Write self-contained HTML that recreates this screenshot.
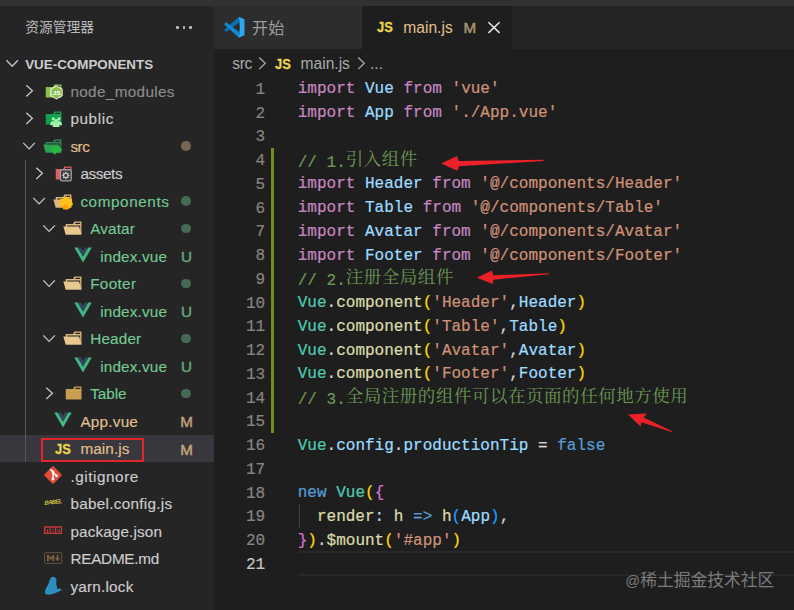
<!DOCTYPE html>
<html lang="zh-CN"><head><meta charset="utf-8"><title>main.js - vue-components</title>
<style>
*{box-sizing:border-box;margin:0;padding:0}
html,body{width:794px;height:610px;overflow:hidden;background:#1e1e1e}
body{position:relative;font-family:"Liberation Sans","Noto Sans CJK SC",sans-serif;color:#ccc;-webkit-font-smoothing:antialiased}
#strip{position:absolute;left:0;top:0;width:794px;height:5.75px;background:#323233}
#side{position:absolute;left:0;top:5.75px;width:213.5px;height:605px;background:#252526}
#title{position:absolute;left:25.2px;top:20px;font-size:13.75px;line-height:16px;color:#bbb;white-space:nowrap;letter-spacing:0}
.more{position:absolute;top:26px;width:2.6px;height:2.6px;border-radius:50%;background:#c5c5c5}
#hdr{position:absolute;left:25.2px;top:56.5px;font-size:13.4px;line-height:16px;font-weight:700;color:#ccc;white-space:nowrap}
.row{position:absolute;left:0;width:213.5px;height:27.5px}
.row.sel{background:#37373d}
.ico{position:absolute;top:3.75px;width:20px;height:20px;display:block}
.ico svg{display:block}
.lbl{position:absolute;top:0;height:27.5px;line-height:27.5px;font-size:15.3px;white-space:nowrap;padding-top:.7px;-webkit-text-stroke:.15px}
.dot{position:absolute;left:181px;top:9.3px;width:9.6px;height:9.6px;border-radius:50%;opacity:.42}
.bdg{position:absolute;left:176.6px;width:20px;text-align:center;top:0;line-height:27.5px;font-size:15.2px;padding-top:1px;opacity:.8;-webkit-text-stroke:.45px}
.jsico{position:absolute;left:2.6px;top:.6px;-webkit-text-stroke:.3px;height:20px;line-height:20px;font-size:15px;font-weight:700;color:#e8d44d;transform:scaleX(.86);transform-origin:0 50%}
.babelico{position:absolute;left:-1px;top:3.2px;width:22px;height:12px;line-height:12px;font-size:6.1px;font-weight:700;font-style:italic;color:#cdbf45;text-align:center;letter-spacing:-.75px;transform:rotate(-6deg) skewX(-8deg)}
#guide{position:absolute;left:25px;top:159.5px;width:1px;height:302px;background:#585858}
#redbox{position:absolute;left:40.7px;top:437.8px;width:103.1px;height:23.8px;border:2px solid #e2242b}
#tabs{position:absolute;left:213.5px;top:5.75px;width:581px;height:42.75px;background:#252526}
.tab{position:absolute;top:0;height:42.75px}
#tab1{left:0;width:148.5px;background:#2d2d2d}
#tab2{left:148.5px;width:150px;background:#1e1e1e}
.tabt{position:absolute;white-space:nowrap;font-size:15.6px;line-height:20px}
#crumbs{position:absolute;left:213.5px;top:48.5px;width:581px;height:28px;background:#1e1e1e}
.cr{position:absolute;top:1.4px;line-height:27.5px;font-size:15.6px;color:#a9a9a9;white-space:nowrap}
#ed{position:absolute;left:0;top:0;width:794px;height:610px;font-family:"Liberation Mono","Noto Serif CJK SC",monospace;font-size:16.03px}
.ln{position:absolute;left:225px;width:40.2px;text-align:right;height:23.75px;line-height:23.75px;color:#858585;padding-top:2.3px;white-space:pre;-webkit-text-stroke:.2px}
.ln.cur{color:#c6c6c6}
.cl{-webkit-text-stroke:.22px;position:absolute;left:297.7px;height:23.75px;line-height:23.75px;white-space:pre;padding-top:1.9px;color:#d4d4d4}
.cjk{-webkit-text-stroke:0;font-weight:400;font-family:"Noto Serif CJK SC","Noto Sans CJK SC",serif;font-size:17.5px;letter-spacing:.53px;color:#6a9955;line-height:20px;position:relative;top:-2px}
#gut{position:absolute;left:271px;top:147.8px;width:3.2px;height:285px;background:#6d901c}
#curline{position:absolute;left:297.7px;top:551.3px;width:497px;height:24.7px;border-top:2.4px solid #282828;border-bottom:2.4px solid #282828}
#ig{position:absolute;left:298.5px;top:504px;width:1px;height:23.75px;background:#404040}
#wm{position:absolute;left:625.3px;top:570.4px;font-size:16.8px;line-height:22px;color:#7b7b7b;white-space:nowrap;font-family:"Liberation Sans","Noto Sans CJK SC",sans-serif}
svg.ov{position:absolute;left:0;top:0}
</style></head><body>
<div id="strip"></div>
<div id="side">
</div>
<div id="title">资源管理器</div>
<span class="more" style="left:176.4px"></span><span class="more" style="left:182.9px"></span><span class="more" style="left:189.4px"></span>
<div id="hdr">VUE-COMPONENTS</div>
<div class="row" style="top:77.00px"><span class="ico" style="left:42.90px;top:3.75px"><svg viewBox="0 0 32 32" width="20" height="20"><path d="M27.5,5.5H18.2L16.1,9.7H4.4V26.5H29.6V5.5Zm0,4.2H19.3l1.1-2.1h7.1Z" fill="#8bc34a"/><polygon points="21.6,7.8 30.6,13 30.6,23.4 21.6,28.6 12.6,23.400 12.6,13" fill="#8bc34a" fill-opacity=".5" stroke="#f4f8ee" stroke-width="1.8" stroke-linejoin="round"/><text x="21.7" y="21.9" font-family="Liberation Sans, sans-serif" font-weight="700" font-size="10" fill="#fff" text-anchor="middle">JS</text></svg></span><span class="lbl" id="l0" style="left:70.40px;color:#8c8c8c;letter-spacing:0.343px">node_modules</span></div>
<div class="row" style="top:104.50px"><span class="ico" style="left:42.90px;top:3.75px"><svg viewBox="0 0 32 32" width="20" height="20"><path d="M27.5,5.5H18.2L16.1,9.7H4.4V26.5H29.6V5.5Zm0,4.2H19.3l1.1-2.1h7.1Z" fill="#12a150"/><g fill="#a6f3b0"><circle cx="16.5" cy="17.5" r="2.6"/><circle cx="25.5" cy="17.5" r="2.6"/><circle cx="21" cy="20.6" r="3"/><path d="M11.5,27.5c0-4,2-6.2,5-6.2s3,1.5,3,1.5v4.7z"/><path d="M30.5,27.5c0-4-2-6.2-5-6.2s-3,1.5-3,1.5v4.7z"/><path d="M15.5,30.5c0-4.4,2.2-6.6,5.5-6.6s5.5,2.2,5.5,6.6z"/></g></svg></span><span class="lbl" id="l1" style="left:70.40px;color:#cccccc;letter-spacing:0.606px">public</span></div>
<div class="row" style="top:132.00px"><span class="ico" style="left:42.90px;top:3.75px"><svg viewBox="0 0 32 32" width="20" height="20"><path d="M27.4,5.5H18.2L16.1,9.7H4.3V26.5H29.5V5.5Zm0,18.7H6.6V11.8H27.4Zm0-14.5H19.2l1-2.1h7.1V9.7Z" fill="#2f8a58"/><polygon points="25.7 13.7 0.5 13.7 4.3 26.5 29.5 26.5 25.7 13.7" fill="#2ca24f"/><path d="M10.500,22 L19.5,14.2 L19.8,19.5 L22.3,14.2 L31,22 L23.5,28 L21.5,24.5 L19.500,30.5 Z" fill="#25b841"/></svg></span><span class="lbl" id="l2" style="left:70.40px;color:#e2c08d;letter-spacing:-0.483px">src</span><span class="dot" style="background:#e2c08d"></span></div>
<div class="row" style="top:159.50px"><span class="ico" style="left:52.90px;top:3.75px"><svg viewBox="0 0 32 32" width="20" height="20"><path d="M27.5,5.5H18.2L16.1,9.7H4.4V26.5H29.6V5.5Zm0,4.2H19.3l1.1-2.1h7.1Z" fill="#dd5f68"/><rect x="11.9" y="11.1" width="17.2" height="17.5" rx="2.2" fill="#3a3a3c" stroke="#a3a3a3" stroke-width="1.9"/><g transform="translate(-.4,-2)"><circle cx="20.9" cy="21.9" r="3.5" fill="none" stroke="#d0d0d0" stroke-width="1.8"/><g stroke="#d0d0d0" stroke-width="1.7"><path d="M20.9,16v2.2M20.9,25.6v2.2M15,21.9h2.2M24.6,21.9h2.2M16.7,17.7l1.6,1.6M23.5,24.5l1.6,1.6M25.1,17.7l-1.6,1.6M18.3,24.5l-1.6,1.6"/></g></g></svg></span><span class="lbl" id="l3" style="left:80.40px;color:#cccccc;letter-spacing:-0.403px">assets</span></div>
<div class="row" style="top:187.00px"><span class="ico" style="left:52.90px;top:3.75px"><svg viewBox="0 0 32 32" width="20" height="20"><path d="M27.4,5.5H18.2L16.1,9.7H4.3V26.5H29.5V5.5Zm0,18.7H6.6V11.8H27.4Zm0-14.5H19.2l1-2.1h7.1V9.7Z" fill="#dcb67a"/><polygon points="25.7 13.7 0.5 13.7 4.3 26.5 29.5 26.5 25.7 13.7" fill="#dcb67a"/><path d="M21,8.2 L25,11.6 L30.2,12.400 L30.6,17.6 L32,21.500 L28,24.6 L25.500,28.6 L21,28 L16.600,29 L14.2,24.8 L10.400,21.8 L12.2,17.400 L12,12.600 L17,11.6 Z" fill="#ffc21a"/><path d="M14.2,24.8 L21,20.500 L25.500,28.600 L21,29.800 L16.6,29 Z" fill="#ff9d0a"/></svg></span><span class="lbl" id="l4" style="left:80.40px;color:#73c991;letter-spacing:0.574px">components</span><span class="dot" style="background:#73c991"></span></div>
<div class="row" style="top:214.50px"><span class="ico" style="left:62.70px;top:3.75px"><svg viewBox="0 0 32 32" width="20" height="20"><path d="M27.4,5.5H18.2L16.1,9.7H4.3V26.5H29.5V5.5Zm0,18.7H6.6V11.8H27.4Zm0-14.5H19.2l1-2.1h7.1V9.7Z" fill="#dcb67a"/><polygon points="25.7 13.7 0.5 13.7 4.3 26.5 29.5 26.5 25.7 13.7" fill="#e8c88e"/></svg></span><span class="lbl" id="l5" style="left:90.20px;color:#73c991;letter-spacing:0.120px">Avatar</span><span class="dot" style="background:#73c991"></span></div>
<div class="row" style="top:242.00px"><span class="ico" style="left:72.70px;top:2.75px"><svg viewBox="0 0 32 32" width="20" height="20"><path d="M2,3.925l14,24.15L30,3.925H24.4L16,18.415,7.53,3.925Z" fill="#41b883"/><path d="M7.53,3.925,16,18.485l8.4-14.56H19.22L16,9.525l-3.29-5.6Z" fill="#35495e"/></svg></span><span class="lbl" id="l6" style="left:100.20px;color:#73c991;letter-spacing:0.155px">index.vue</span><span class="bdg" style="color:#73c991">U</span></div>
<div class="row" style="top:269.50px"><span class="ico" style="left:62.70px;top:3.75px"><svg viewBox="0 0 32 32" width="20" height="20"><path d="M27.4,5.5H18.2L16.1,9.7H4.3V26.5H29.5V5.5Zm0,18.7H6.6V11.8H27.4Zm0-14.5H19.2l1-2.1h7.1V9.7Z" fill="#dcb67a"/><polygon points="25.7 13.7 0.5 13.7 4.3 26.5 29.5 26.5 25.7 13.7" fill="#e8c88e"/></svg></span><span class="lbl" id="l7" style="left:90.20px;color:#73c991;letter-spacing:0.324px">Footer</span><span class="dot" style="background:#73c991"></span></div>
<div class="row" style="top:297.00px"><span class="ico" style="left:72.70px;top:2.75px"><svg viewBox="0 0 32 32" width="20" height="20"><path d="M2,3.925l14,24.15L30,3.925H24.4L16,18.415,7.53,3.925Z" fill="#41b883"/><path d="M7.53,3.925,16,18.485l8.4-14.56H19.22L16,9.525l-3.29-5.6Z" fill="#35495e"/></svg></span><span class="lbl" id="l8" style="left:100.20px;color:#73c991;letter-spacing:0.155px">index.vue</span><span class="bdg" style="color:#73c991">U</span></div>
<div class="row" style="top:324.50px"><span class="ico" style="left:62.70px;top:3.75px"><svg viewBox="0 0 32 32" width="20" height="20"><path d="M27.4,5.5H18.2L16.1,9.7H4.3V26.5H29.5V5.5Zm0,18.7H6.6V11.8H27.4Zm0-14.5H19.2l1-2.1h7.1V9.7Z" fill="#dcb67a"/><polygon points="25.7 13.7 0.5 13.7 4.3 26.5 29.5 26.5 25.7 13.7" fill="#e8c88e"/></svg></span><span class="lbl" id="l9" style="left:90.20px;color:#73c991;letter-spacing:0.169px">Header</span><span class="dot" style="background:#73c991"></span></div>
<div class="row" style="top:352.00px"><span class="ico" style="left:72.70px;top:2.75px"><svg viewBox="0 0 32 32" width="20" height="20"><path d="M2,3.925l14,24.15L30,3.925H24.4L16,18.415,7.53,3.925Z" fill="#41b883"/><path d="M7.53,3.925,16,18.485l8.4-14.56H19.22L16,9.525l-3.29-5.6Z" fill="#35495e"/></svg></span><span class="lbl" id="l10" style="left:100.20px;color:#73c991;letter-spacing:0.155px">index.vue</span><span class="bdg" style="color:#73c991">U</span></div>
<div class="row" style="top:379.50px"><span class="ico" style="left:62.70px;top:3.75px"><svg viewBox="0 0 32 32" width="20" height="20"><path d="M27.5,5.5H18.2L16.1,9.7H4.4V26.5H29.6V5.5Zm0,4.2H19.3l1.1-2.1h7.1Z" fill="#c99e51"/></svg></span><span class="lbl" id="l11" style="left:90.20px;color:#73c991;letter-spacing:-0.062px">Table</span><span class="dot" style="background:#73c991"></span></div>
<div class="row" style="top:407.00px"><span class="ico" style="left:52.90px;top:2.75px"><svg viewBox="0 0 32 32" width="20" height="20"><path d="M2,3.925l14,24.15L30,3.925H24.4L16,18.415,7.53,3.925Z" fill="#41b883"/><path d="M7.53,3.925,16,18.485l8.4-14.56H19.22L16,9.525l-3.29-5.6Z" fill="#35495e"/></svg></span><span class="lbl" id="l12" style="left:80.40px;color:#e2c08d;letter-spacing:0.225px">App.vue</span><span class="bdg" style="color:#e2c08d">M</span></div>
<div class="row sel" style="top:434.50px"><span class="ico" style="left:52.90px;top:3.75px"><span class="jsico">JS</span></span><span class="lbl" id="l13" style="left:80.40px;color:#e2c08d;letter-spacing:0.084px">main.js</span><span class="bdg" style="color:#e2c08d">M</span></div>
<div class="row" style="top:462.00px"><span class="ico" style="left:42.90px;top:2.95px"><svg viewBox="0 0 32 32" width="20" height="20"><path d="M29.47,14.72,17.28,2.53a1.8,1.8,0,0,0-2.55,0L2.53,14.72a1.8,1.8,0,0,0,0,2.55L14.72,29.47a1.8,1.8,0,0,0,2.55,0L29.47,17.27A1.8,1.8,0,0,0,29.47,14.72Z" fill="#dd4c35"/><g stroke="#fff" stroke-width="2.3" fill="none" stroke-linecap="round"><path d="M12.2,7.2L16,11V22"/><path d="M16,11.6l5.2,5.2"/></g><g fill="#fff"><circle cx="16" cy="11" r="2.2"/><circle cx="16" cy="22.3" r="2.3"/><circle cx="21.6" cy="17.2" r="2.2"/></g></svg></span><span class="lbl" id="l14" style="left:70.40px;color:#cccccc;letter-spacing:0.554px">.gitignore</span></div>
<div class="row" style="top:489.50px"><span class="ico" style="left:42.90px;top:3.75px"><span class="babelico">BABEL</span></span><span class="lbl" id="l15" style="left:70.40px;color:#cccccc;letter-spacing:0.276px">babel.config.js</span></div>
<div class="row" style="top:517.00px"><span class="ico" style="left:42.90px;top:2.75px"><svg viewBox="0 0 32 32" width="20" height="20"><rect x="1.5" y="10" width="29" height="12.4" fill="#c33a3a"/><g fill="#252526"><rect x="4" y="12.3" width="6.6" height="8"/><rect x="12.3" y="12.3" width="6.8" height="8"/><rect x="21" y="12.3" width="7.4" height="8"/></g><g fill="#c33a3a"><rect x="6.4" y="14.6" width="1.9" height="5.7"/><rect x="14.8" y="14.6" width="1.9" height="3.4"/><rect x="12.3" y="20.3" width="3.4" height="2.1"/><rect x="23.1" y="14.6" width="1.3" height="5.7"/><rect x="25.7" y="14.6" width="1.1" height="5.7"/></g></svg></span><span class="lbl" id="l16" style="left:70.40px;color:#cccccc;letter-spacing:0.126px">package.json</span></div>
<div class="row" style="top:544.50px"><span class="ico" style="left:42.90px;top:3.75px"><svg viewBox="0 0 32 32" width="20" height="20"><rect x="2.4" y="7.6" width="27.6" height="17" rx="1.2" fill="none" stroke="#66533a" stroke-width="1.6"/><path d="M6.2,21V11.2h3l3,4.2 3-4.2h3V21h-3v-5.4l-3,4-3-4V21z" fill="#7b633f"/><path d="M23.2,21l-4-5h2.6V11.2h2.8V16h2.6z" fill="#7b633f"/></svg></span><span class="lbl" id="l17" style="left:70.40px;color:#cccccc;letter-spacing:-0.253px">README.md</span></div>
<div class="row" style="top:572.00px"><span class="ico" style="left:42.90px;top:3.75px"><svg viewBox="0 0 32 32" width="20" height="20"><path d="M15.900,1.200 C19,1 21.500,3.500 21.500,7 C21.500,9.500 21,11 21,13 C22.500,15.500 22.800,18 22,20.500 C24.500,20.500 27,20 28.900,20.600 C30.200,21 30,22.600 28.800,23 C25.500,24.500 22,26.500 18.500,27.600 C15,29.500 10.500,30.200 6,29.700 C3.200,29.300 2.500,27 3.300,23.400 C4.500,19.500 6.500,16 8.500,13 C9.500,10 10,8 10.600,6.600 C11.500,3.500 13.500,1.500 15.900,1.200 Z" fill="#2b8fc0"/></svg></span><span class="lbl" id="l18" style="left:70.40px;color:#cccccc;letter-spacing:0.221px">yarn.lock</span></div>
<div id="guide"></div>
<div id="redbox"></div>
<svg class="ov" width="214" height="610" viewBox="0 0 214 610"><path d="M6.40,60.20 L12.20,66.20 L18.00,60.20" fill="none" stroke="#c5c5c5" stroke-width="1.35"/><path d="M26.30,85.15 L32.40,90.85 L26.30,96.55" fill="none" stroke="#c5c5c5" stroke-width="1.35"/><path d="M26.30,112.65 L32.40,118.35 L26.30,124.05" fill="none" stroke="#c5c5c5" stroke-width="1.35"/><path d="M23.30,142.85 L29.10,148.85 L34.90,142.85" fill="none" stroke="#c5c5c5" stroke-width="1.35"/><path d="M36.30,167.65 L42.40,173.35 L36.30,179.05" fill="none" stroke="#c5c5c5" stroke-width="1.35"/><path d="M33.30,197.85 L39.10,203.85 L44.90,197.85" fill="none" stroke="#c5c5c5" stroke-width="1.35"/><path d="M43.30,225.35 L49.10,231.35 L54.90,225.35" fill="none" stroke="#c5c5c5" stroke-width="1.35"/><path d="M43.30,280.35 L49.10,286.35 L54.90,280.35" fill="none" stroke="#c5c5c5" stroke-width="1.35"/><path d="M43.30,335.35 L49.10,341.35 L54.90,335.35" fill="none" stroke="#c5c5c5" stroke-width="1.35"/><path d="M46.30,387.65 L52.40,393.35 L46.30,399.05" fill="none" stroke="#c5c5c5" stroke-width="1.35"/></svg>
<div id="tabs">
 <div class="tab" id="tab1"><span style="position:absolute;left:9.9px;top:10px"><svg viewBox="0 0 100 100" width="22.4" height="22.4"><path d="M71,3 L5,63 L14,72 L71,30Z" fill="#0a6fb5"/><path d="M71,97 L5,37 L14,28 L71,70Z" fill="#1489d6"/><path d="M71,3 L96,14.5 V85.5 L71,97 L75,50Z" fill="#2aa6f2"/><path d="M71,30 L45,50 L71,70Z" fill="#2d2d2d"/></svg></span><span class="tabt" style="left:38.6px;top:12.4px;font-size:16.1px;color:#9d9d9d">开始</span></div>
 <div class="tab" id="tab2">
  <span class="tabt" id="tjs" style="-webkit-text-stroke:.3px;left:15.4px;top:11.4px;font-size:15px;font-weight:700;color:#e8d44d;transform:scaleX(.86);transform-origin:0 50%">JS</span>
  <span class="tabt" id="tmain" style="left:41.3px;top:11.9px;color:#e2c08d">main.js</span>
  <span class="tabt" id="tm" style="left:101.6px;top:11.9px;color:#ad9971;font-size:15.2px;-webkit-text-stroke:.45px">M</span>
  <svg style="position:absolute;left:124px;top:14px" width="16" height="16" viewBox="0 0 16 16"><path d="M2.4,2.3 L13.6,12.9 M13.6,2.3 L2.4,12.9" stroke="#e6e6e6" stroke-width="1.5" fill="none"/></svg>
 </div>
</div>
<div id="crumbs">
 <span class="cr" id="c1" style="left:18.8px;letter-spacing:-.4px">src</span>
 <span class="cr" id="c2" style="-webkit-text-stroke:.3px;left:61.6px;top:1.1px;font-size:15px;font-weight:700;color:#e8d44d;transform:scaleX(.86);transform-origin:0 50%">JS</span>
 <span class="cr" id="c3" style="left:87px">main.js</span>
 <span class="cr" id="c4" style="left:156.5px">...</span>
 <svg style="position:absolute;left:0;top:0" width="200" height="28" viewBox="0 0 200 28"><path d="M45.2,8.5 L51.3,14.3 L45.2,20.1 M144.2,8.5 L150.3,14.3 L144.2,20.1" fill="none" stroke="#a9a9a9" stroke-width="1.3"/></svg>
</div>
<div id="ed">
<div id="gut"></div>
<div id="curline"></div>
<div id="ig"></div>
<div class="ln" style="top:76.55px">1</div>
<div class="cl" style="top:76.55px"><span style="color:#c586c0">import</span><span style="color:#d4d4d4">&nbsp;</span><span style="color:#9cdcfe">Vue</span><span style="color:#d4d4d4">&nbsp;</span><span style="color:#c586c0">from</span><span style="color:#d4d4d4">&nbsp;</span><span style="color:#ce9178">'vue'</span></div>
<div class="ln" style="top:100.30px">2</div>
<div class="cl" style="top:100.30px"><span style="color:#c586c0">import</span><span style="color:#d4d4d4">&nbsp;</span><span style="color:#9cdcfe">App</span><span style="color:#d4d4d4">&nbsp;</span><span style="color:#c586c0">from</span><span style="color:#d4d4d4">&nbsp;</span><span style="color:#ce9178">'./App.vue'</span></div>
<div class="ln" style="top:124.05px">3</div>
<div class="ln" style="top:147.80px">4</div>
<div class="cl" style="top:147.80px"><span style="color:#6a9955">// 1.</span><span class="cjk">引入组件</span></div>
<div class="ln" style="top:171.55px">5</div>
<div class="cl" style="top:171.55px"><span style="color:#c586c0">import</span><span style="color:#d4d4d4">&nbsp;</span><span style="color:#9cdcfe">Header</span><span style="color:#d4d4d4">&nbsp;</span><span style="color:#c586c0">from</span><span style="color:#d4d4d4">&nbsp;</span><span style="color:#ce9178">'@/components/Header'</span></div>
<div class="ln" style="top:195.30px">6</div>
<div class="cl" style="top:195.30px"><span style="color:#c586c0">import</span><span style="color:#d4d4d4">&nbsp;</span><span style="color:#9cdcfe">Table</span><span style="color:#d4d4d4">&nbsp;</span><span style="color:#c586c0">from</span><span style="color:#d4d4d4">&nbsp;</span><span style="color:#ce9178">'@/components/Table'</span></div>
<div class="ln" style="top:219.05px">7</div>
<div class="cl" style="top:219.05px"><span style="color:#c586c0">import</span><span style="color:#d4d4d4">&nbsp;</span><span style="color:#9cdcfe">Avatar</span><span style="color:#d4d4d4">&nbsp;</span><span style="color:#c586c0">from</span><span style="color:#d4d4d4">&nbsp;</span><span style="color:#ce9178">'@/components/Avatar'</span></div>
<div class="ln" style="top:242.80px">8</div>
<div class="cl" style="top:242.80px"><span style="color:#c586c0">import</span><span style="color:#d4d4d4">&nbsp;</span><span style="color:#9cdcfe">Footer</span><span style="color:#d4d4d4">&nbsp;</span><span style="color:#c586c0">from</span><span style="color:#d4d4d4">&nbsp;</span><span style="color:#ce9178">'@/components/Footer'</span></div>
<div class="ln" style="top:266.55px">9</div>
<div class="cl" style="top:266.55px"><span style="color:#6a9955">// 2.</span><span class="cjk">注册全局组件</span></div>
<div class="ln" style="top:290.30px">10</div>
<div class="cl" style="top:290.30px"><span style="color:#4ec9b0">Vue</span><span style="color:#d4d4d4">.</span><span style="color:#dcdcaa">component</span><span style="color:#ffd700">(</span><span style="color:#ce9178">'Header'</span><span style="color:#d4d4d4">,</span><span style="color:#9cdcfe">Header</span><span style="color:#ffd700">)</span></div>
<div class="ln" style="top:314.05px">11</div>
<div class="cl" style="top:314.05px"><span style="color:#4ec9b0">Vue</span><span style="color:#d4d4d4">.</span><span style="color:#dcdcaa">component</span><span style="color:#ffd700">(</span><span style="color:#ce9178">'Table'</span><span style="color:#d4d4d4">,</span><span style="color:#9cdcfe">Table</span><span style="color:#ffd700">)</span></div>
<div class="ln" style="top:337.80px">12</div>
<div class="cl" style="top:337.80px"><span style="color:#4ec9b0">Vue</span><span style="color:#d4d4d4">.</span><span style="color:#dcdcaa">component</span><span style="color:#ffd700">(</span><span style="color:#ce9178">'Avatar'</span><span style="color:#d4d4d4">,</span><span style="color:#9cdcfe">Avatar</span><span style="color:#ffd700">)</span></div>
<div class="ln" style="top:361.55px">13</div>
<div class="cl" style="top:361.55px"><span style="color:#4ec9b0">Vue</span><span style="color:#d4d4d4">.</span><span style="color:#dcdcaa">component</span><span style="color:#ffd700">(</span><span style="color:#ce9178">'Footer'</span><span style="color:#d4d4d4">,</span><span style="color:#9cdcfe">Footer</span><span style="color:#ffd700">)</span></div>
<div class="ln" style="top:385.30px">14</div>
<div class="cl" style="top:385.30px"><span style="color:#6a9955">// 3.</span><span class="cjk">全局注册的组件可以在页面的任何地方使用</span></div>
<div class="ln" style="top:409.05px">15</div>
<div class="ln" style="top:432.80px">16</div>
<div class="cl" style="top:432.80px"><span style="color:#4ec9b0">Vue</span><span style="color:#d4d4d4">.</span><span style="color:#9cdcfe">config</span><span style="color:#d4d4d4">.</span><span style="color:#9cdcfe">productionTip</span><span style="color:#d4d4d4"> = </span><span style="color:#569cd6">false</span></div>
<div class="ln" style="top:456.55px">17</div>
<div class="ln" style="top:480.30px">18</div>
<div class="cl" style="top:480.30px"><span style="color:#569cd6">new</span><span style="color:#d4d4d4">&nbsp;</span><span style="color:#4ec9b0">Vue</span><span style="color:#ffd700">(</span><span style="color:#da70d6">{</span></div>
<div class="ln" style="top:504.05px">19</div>
<div class="cl" style="top:504.05px"><span style="color:#d4d4d4">&nbsp;&nbsp;</span><span style="color:#dcdcaa">render</span><span style="color:#9cdcfe">:</span><span style="color:#d4d4d4">&nbsp;</span><span style="color:#dcdcaa">h</span><span style="color:#d4d4d4">&nbsp;</span><span style="color:#569cd6">=&gt;</span><span style="color:#d4d4d4">&nbsp;</span><span style="color:#dcdcaa">h</span><span style="color:#179fff">(</span><span style="color:#9cdcfe">App</span><span style="color:#179fff">)</span><span style="color:#d4d4d4">,</span></div>
<div class="ln" style="top:527.80px">20</div>
<div class="cl" style="top:527.80px"><span style="color:#da70d6">}</span><span style="color:#ffd700">)</span><span style="color:#d4d4d4">.</span><span style="color:#dcdcaa">$mount</span><span style="color:#ffd700">(</span><span style="color:#ce9178">'#app'</span><span style="color:#ffd700">)</span></div>
<div class="ln cur" style="top:551.55px">21</div>
</div>
<svg class="ov" width="794" height="610" viewBox="0 0 794 610"><polygon points="441.0,163.6 457.0,156.1 458.8,161.0 543.5,159.7 543.5,160.9 458.8,166.3 457.4,170.7" fill="#ea2128"/><polygon points="476.8,277.8 491.7,270.4 493.3,275.2 548.8,273.2 548.8,274.3 493.3,279.7 492.9,283.9" fill="#ea2128"/><polygon points="628.0,414.6 646.9,413.5 643.6,417.6 671.8,430.9 671.5,432.0 641.6,422.2 640.6,426.6" fill="#ea2128"/></svg>
<div id="wm"><span style="font-size:14.6px">@</span>稀土掘金技术社区</div>
</body></html>
